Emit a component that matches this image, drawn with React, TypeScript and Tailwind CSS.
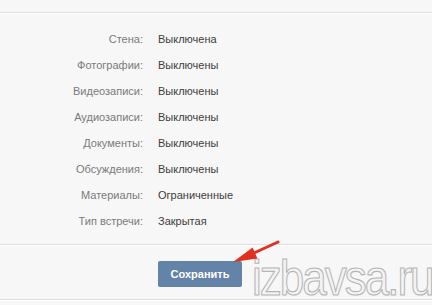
import React from 'react';

const rows: [string, string][] = [
    ['Стена:', 'Выключена'],
    ['Фотографии:', 'Выключены'],
    ['Видеозаписи:', 'Выключены'],
    ['Аудиозаписи:', 'Выключены'],
    ['Документы:', 'Выключены'],
    ['Обсуждения:', 'Выключены'],
    ['Материалы:', 'Ограниченные'],
    ['Тип встречи:', 'Закрытая'],
];

const App: React.FC = () => {
    return (
        <div className="relative w-[432px] h-[305px] overflow-hidden bg-[#f7f7f7] font-['Liberation_Sans',sans-serif] text-[11px]">
            <div className="h-3" />
            <div className="h-px bg-[#dedede]" />
            <div className="h-px bg-white" />

            <div className="pt-[12px] pb-[10px]">
                {rows.map(([label, value]) => (
                    <div key={label} className="flex items-center h-[26px]">
                        <div className="w-[143px] text-right text-[#7a7a7a]">{label}</div>
                        <div className="pl-[15px] text-[#3d3d3d]">{value}</div>
                    </div>
                ))}
            </div>

            <div className="h-px bg-[#dedede]" />
            <div className="h-px bg-white" />

            <div className="pt-[15px] pl-[158px]">
                <button className="w-[84px] h-[26px] rounded-[2px] bg-[#6383a8] text-white font-bold text-[11px]">
                    Сохранить
                </button>
            </div>

            <div className="absolute left-0 right-0 top-[299px] h-px bg-[#dedede]" />
            <div className="absolute left-0 right-0 top-[300px] h-px bg-white" />

            <div className="absolute left-[252px] top-[259px] text-[44px] leading-none font-['Liberation_Sans',sans-serif] text-[#f4f4f4] [-webkit-text-stroke:1px_#b5b5b5] tracking-[-2px] origin-bottom-left scale-y-[1.15]">
                izbavsa.ru
            </div>

            <svg className="absolute left-[225px] top-[236px]" width="60" height="36" viewBox="0 0 60 36">
                <line x1="53" y1="6" x2="29" y2="17" stroke="#e0301e" strokeWidth="3" strokeLinecap="round" />
                <polygon points="8,26 27.6,11.5 32.4,22.5" fill="#e0301e" />
            </svg>
        </div>
    );
};

export default App;
